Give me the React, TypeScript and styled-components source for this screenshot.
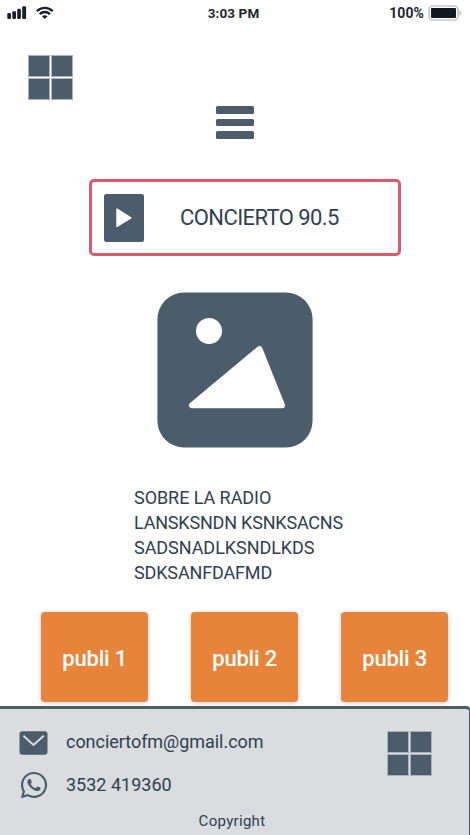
import React from "react";
import styled, { createGlobalStyle } from "styled-components";
import { FaWhatsapp } from "react-icons/fa";

const slate = "#4b5c6a";
const ink = "#2f4050";

const GlobalStyle = createGlobalStyle`
  * { box-sizing: border-box; }
  body { margin: 0; background: #fff; font-family: Roboto, "Liberation Sans", sans-serif; color: ${ink}; }
`;

const Screen = styled.div`
  width: 470px;
  height: 835px;
  overflow: hidden;
  display: flex;
  flex-direction: column;
  background: #fff;
`;

const StatusBar = styled.header`
  height: 26px;
  flex: none;
  display: grid;
  grid-template-columns: 1fr auto 1fr;
  padding: 0 10px 0 7px;
  align-items: center;
  color: #1d2733;
`;

const Signals = styled.div`
  display: flex;
  align-items: center;
  gap: 9px;
  svg { display: block; }
`;

const Battery = styled.div`
  display: flex;
  justify-content: flex-end;
  align-items: center;
  gap: 4px;
  margin-right: -2px;
  svg { display: block; }
`;

const Label = styled.span<{ $size: number; $spacing?: number; $weight?: number }>`
  font-size: ${(p) => p.$size}px;
  font-weight: ${(p) => p.$weight ?? 400};
  letter-spacing: ${(p) => p.$spacing ?? 0}px;
  line-height: 1.2;
  white-space: nowrap;
`;

const TopBar = styled.div`
  height: 153px;
  flex: none;
  display: flex;
  padding: 29px 0 0 28px;
`;

const Tiles = styled.div`
  display: grid;
  grid-template-columns: 22px 22px;
  grid-template-rows: 22px 22px;
  gap: 1px;
  width: 45px;
  height: 45px;
`;

const Tile = styled.i`
  background: ${slate};
  border: 1px solid #a9b2bc;
`;

const MenuButton = styled.button`
  display: flex;
  flex-direction: column;
  gap: 5px;
  width: 38px;
  margin: 51px 0 0 143px;
  padding: 0;
  border: 0;
  background: none;
`;

const MenuLine = styled.span`
  height: 7.6px;
  border-radius: 1.5px;
  background: ${slate};
`;

const Player = styled.section`
  flex: none;
  display: flex;
  align-items: center;
  width: 312px;
  height: 77px;
  margin-left: 89px;
  padding-left: 12px;
  border: 3px solid #dc5a70;
  border-radius: 5px;
  ${Label} { padding-top: 2px; }
`;

const PlayButton = styled.button`
  display: block;
  width: 40px;
  height: 48px;
  margin-right: 36px;
  padding: 0;
  border: 0;
  border-radius: 2.5px;
  background: ${slate};
  svg { display: block; }
`;

const Cover = styled.svg`
  display: block;
  flex: none;
  width: 156px;
  height: 156px;
  margin: 36px 0 0 157px;
`;

const About = styled.div`
  display: flex;
  flex-direction: column;
  margin: 37px 0 0 134px;
  ${Label} { line-height: 25px; }
`;

const Ads = styled.div`
  flex: none;
  display: grid;
  grid-template-columns: repeat(3, 107.3px);
  gap: 42.7px;
  margin: 27.4px 0 0 41px;
`;

const Ad = styled.article`
  height: 90px;
  display: flex;
  align-items: center;
  justify-content: center;
  padding-top: 3px;
  border-radius: 4px;
  background: #e7843a;
  color: #fff;
  box-shadow: 0 1px 5px rgba(0, 0, 0, 0.2);
`;

const Footer = styled.footer`
  z-index: 1;
  flex: none;
  height: 129px;
  margin: 3.6px 0 0 -4px;
  width: 475px;
  padding-left: 4px;
  border: 3px solid ${slate};
  border-width: 3px 2px 0 0;
  border-radius: 0 5px 0 0;
  background: #d9dde0;
`;

const FooterMain = styled.div`
  display: flex;
  justify-content: space-between;
  padding: 22px 37px 0 19px;
`;

const Contacts = styled.div`
  display: grid;
  grid-template-columns: 47px auto;
  grid-template-rows: 22px 28px;
  row-gap: 18px;
  align-items: center;
  svg { display: block; }
`;

const MailIcon = styled.svg`
  margin-top: 2px;
`;

const Copyright = styled.div`
  display: flex;
  justify-content: center;
  padding-right: 5px;
  margin-top: 13px;
`;

const Logo = () => (
  <Tiles>
    <Tile /><Tile /><Tile /><Tile />
  </Tiles>
);

export default function App() {
  return (
    <>
      <GlobalStyle />
      <Screen>
        <StatusBar>
          <Signals>
            <svg width="20" height="14" viewBox="0 0 20 14" fill="#17202a">
              <rect x="0.3" y="7" width="3.7" height="6" rx="1.2" />
              <rect x="5.3" y="5.2" width="3.7" height="7.8" rx="1.2" />
              <rect x="10.2" y="2.8" width="3.7" height="10.2" rx="1.2" />
              <rect x="15.2" y="0.2" width="3.9" height="12.8" rx="1.2" />
            </svg>
            <svg width="18" height="14" viewBox="0 0 18 14" fill="none" stroke="#17202a" strokeWidth="2.3">
              <path d="M.9 5.1a11.4 11.4 0 0 1 15.8 0M3.7 8.1a7.2 7.2 0 0 1 10.2 0" />
              <path d="M8.8 13 6 10.3q2.8-2 5.6 0z" fill="#17202a" stroke="none" />
            </svg>
          </Signals>
          <Label $size={13.5} $weight={700} $spacing={0.1}>3:03 PM</Label>
          <Battery>
            <Label $size={14} $weight={700} $spacing={0.1}>100%</Label>
            <svg width="34" height="16" viewBox="0 0 34 16">
              <rect x="1" y="1" width="29" height="14" rx="3.5" fill="#fff" stroke="#c3c6c9" strokeWidth="1.6" />
              <rect x="3" y="3" width="25" height="10" rx="1" fill="#101922" />
              <path d="M31.3 5.2q2.4 1 2.4 2.8t-2.4 2.8z" fill="#c3c6c9" />
            </svg>
          </Battery>
        </StatusBar>

        <TopBar>
          <Logo />
          <MenuButton aria-label="Menu">
            <MenuLine /><MenuLine /><MenuLine />
          </MenuButton>
        </TopBar>

        <Player>
          <PlayButton aria-label="Play">
            <svg width="40" height="48" viewBox="0 0 40 48">
              <path d="M13 15.2v17.3L26.8 23.8z" fill="#fff" stroke="#fff" strokeWidth="1.4" strokeLinejoin="round" />
            </svg>
          </PlayButton>
          <Label $size={22} $spacing={-0.58}>CONCIERTO 90.5</Label>
        </Player>

        <Cover viewBox="0 0 156 156">
          <rect x="0.4" y="0.4" width="155.2" height="155.2" rx="27" fill={slate} />
          <circle cx="52" cy="39" r="13" fill="#fff" />
          <path d="M102.5 57 35 113.3H125z" fill="#fff" stroke="#fff" strokeWidth="6" strokeLinejoin="round" />
        </Cover>

        <About>
          <Label $size={18} $spacing={-0.06}>SOBRE LA RADIO</Label>
          <Label $size={18} $spacing={-0.2}>LANSKSNDN KSNKSACNS</Label>
          <Label $size={18} $spacing={-0.05}>SADSNADLKSNDLKDS</Label>
          <Label $size={18} $spacing={-0.15}>SDKSANFDAFMD</Label>
        </About>

        <Ads>
          {[1, 2, 3].map((n) => (
            <Ad key={n}>
              <Label $size={22} $weight={500} $spacing={-0.2}>publi {n}</Label>
            </Ad>
          ))}
        </Ads>

        <Footer>
          <FooterMain>
            <Contacts>
              <MailIcon width="29" height="24" viewBox="0 0 29 24">
                <rect x="0.5" y="0.3" width="28" height="23.4" rx="3" fill={slate} />
                <path d="M4.4 4.8 14.5 14 24.8 4.8" fill="none" stroke="#d9dde0" strokeWidth="2" />
              </MailIcon>
              <Label $size={18} $spacing={-0.04}>conciertofm@gmail.com</Label>
              <FaWhatsapp size={30} color={slate} />
              <Label $size={18}>3532 419360</Label>
            </Contacts>
            <Logo />
          </FooterMain>
          <Copyright>
            <Label $size={15} $spacing={0.3}>Copyright</Label>
          </Copyright>
        </Footer>
      </Screen>
    </>
  );
}
